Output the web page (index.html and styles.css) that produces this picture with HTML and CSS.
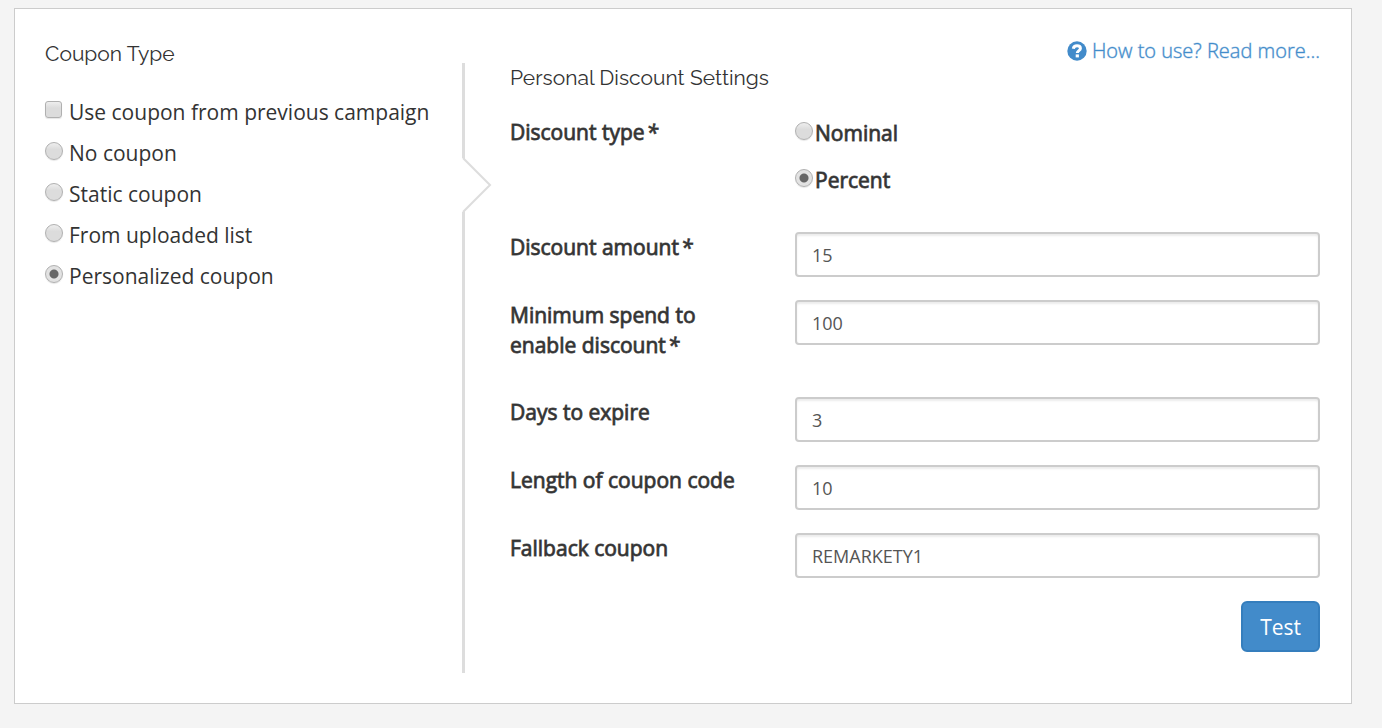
FILE: index.html
```html
<!DOCTYPE html>
<html lang="en">
<head>
    <meta charset="UTF-8">
    <meta name="viewport" content="width=device-width, initial-scale=1.0">
    <title>Coupon Settings</title>
    <link rel="stylesheet" href="styles.css">
</head>
<body>
    <form class="panel">
        <fieldset class="coupon-type">
            <legend class="section-title">Coupon Type</legend>
            <label class="option"><input type="checkbox" class="check" name="use_previous"> Use coupon from previous campaign</label>
            <label class="option"><input type="radio" class="radio" name="coupon_type" value="none"> No coupon</label>
            <label class="option"><input type="radio" class="radio" name="coupon_type" value="static"> Static coupon</label>
            <label class="option"><input type="radio" class="radio" name="coupon_type" value="list"> From uploaded list</label>
            <label class="option"><input type="radio" class="radio" name="coupon_type" value="personal" checked> Personalized coupon</label>
        </fieldset>

        <div class="main">
            <a class="help-link" href="#help">
                <svg class="help-icon" viewBox="0 0 20 20" aria-hidden="true">
                    <circle cx="10" cy="10" r="9.700" fill="currentColor"/>
                    <path d="M6.300 7.700C6.700 5.500 8.100 4.800 10 4.800c2 0 3.400 1 3.400 2.600 0 2.300-3.100 2.200-3.100 4.700" fill="none" stroke="#fff" stroke-width="3"/>
                    <rect x="8.700" y="13.400" width="3.200" height="3" fill="#fff"/>
                </svg>
                How to use? Read more...
            </a>

            <div class="settings">
                <!-- Arrow pointing from the selected type to its settings -->
                <svg class="arrow" viewBox="0 0 30 56" aria-hidden="true">
                    <path d="M0 1H1L29 28L1 55H0Z" fill="#fff"/>
                    <path d="M1 1L28 28L1 55" fill="none" stroke="#ddd" stroke-width="2"/>
                </svg>

                <h2 class="section-title">Personal Discount Settings</h2>

                <div class="row" role="radiogroup" aria-labelledby="discount-type">
                    <span class="field-label" id="discount-type">Discount type<em class="required">*</em></span>
                    <div class="choices">
                        <label class="choice"><input type="radio" class="radio" name="discount_type" value="nominal">Nominal</label>
                        <label class="choice"><input type="radio" class="radio" name="discount_type" value="percent" checked>Percent</label>
                    </div>
                </div>
                <div class="row">
                    <label class="field-label" for="amount">Discount amount<em class="required">*</em></label>
                    <input type="text" class="field" id="amount" value="15">
                </div>
                <div class="row row-tall">
                    <label class="field-label" for="min-spend">Minimum spend to enable discount<em class="required">*</em></label>
                    <input type="text" class="field" id="min-spend" value="100">
                </div>
                <div class="row">
                    <label class="field-label" for="expire">Days to expire</label>
                    <input type="text" class="field" id="expire" value="3">
                </div>
                <div class="row">
                    <label class="field-label" for="code-length">Length of coupon code</label>
                    <input type="text" class="field" id="code-length" value="10">
                </div>
                <div class="row">
                    <label class="field-label" for="fallback">Fallback coupon</label>
                    <input type="text" class="field" id="fallback" value="REMARKETY1">
                </div>
                <div class="actions">
                    <button type="button" class="btn">Test</button>
                </div>
            </div>
        </div>
    </form>
</body>
</html>
```
FILE: styles.css
```css
* {
    box-sizing: border-box;
}
body {
    margin: 0;
    padding: 8px 30px 24px 14px;
    background-color: #f4f4f4;
    color: #333;
    font-family: "Open Sans", sans-serif;
    font-size: 21px;
    line-height: 30px;
}
.panel {
    display: flex;
    padding: 30px 31px 30px 30px;
    background: #fff;
    border: 1px solid #ccc;
}
.section-title {
    margin: 0;
    padding: 0;
    font-family: Raleway, Lato, sans-serif;
    font-size: 21px;
    font-weight: 400;
}
.coupon-type {
    flex: 0 0 417px;
    margin: 0;
    padding: 0;
    border: 0;
}
.coupon-type .section-title {
    margin-bottom: 28px;
}
.option {
    display: flex;
    align-items: center;
    gap: 6px;
    margin-bottom: 11px;
}
.check,
.radio {
    appearance: none;
    flex: none;
    width: 18px;
    height: 18px;
    margin: 0 0 5px;
    border: 1px solid #b0b0b0;
    border-radius: 50%;
    background: linear-gradient(#eee, #dcdcdc 40%, #dcdcdc);
    box-shadow: 0 1px 1px rgba(0,0,0,0.1);
}
.check {
    width: 17px;
    height: 17px;
    margin-right: 1px;
    border-radius: 3px;
}
.radio:checked {
    background: radial-gradient(circle, #666 4px, #e2e2e2 5px);
}
.main {
    flex: 1;
    display: flex;
    flex-direction: column;
}
.help-link {
    display: flex;
    align-items: center;
    align-self: flex-end;
    gap: 5px;
    height: 24px;
    color: #428bca;
    font-size: 20px;
    font-weight: 300;
    text-decoration: none;
    -webkit-text-stroke: 1px rgba(66,139,202,0.4);
}
.help-icon {
    width: 20px;
    height: 20px;
}
.settings {
    position: relative;
    padding-left: 45px;
    padding-bottom: 21px;
    border-left: 3px solid #ddd;
}
.arrow {
    position: absolute;
    top: 94px;
    left: -3px;
    width: 30px;
    height: 56px;
}
.settings .section-title {
    margin-bottom: 24px;
}
.row {
    display: grid;
    grid-template-columns: 240px 1fr;
    column-gap: 45px;
    align-items: start;
    margin-bottom: 23px;
}
.row-tall {
    margin-bottom: 37px;
}
/* Regular width with a soft bold outline */
.field-label,
.choice {
    -webkit-text-stroke: 1px rgba(51,51,51,0.8);
}
.required {
    margin-left: 2px;
}
.choices {
    display: grid;
    gap: 17px;
    padding: 1px 0 14px;
}
.choice {
    display: flex;
    align-items: center;
    gap: 2px;
}
.field {
    width: 100%;
    height: 45px;
    padding: 0 15px;
    border: 2px solid #ccc;
    border-radius: 4px;
    background: #fff;
    box-shadow: inset 0 2px 2px rgba(0,0,0,0.08);
    color: #555;
    font-family: inherit;
    font-size: 18px;
}
.actions {
    display: flex;
    justify-content: flex-end;
}
.btn {
    height: 51px;
    padding: 0 17px;
    border: 2px solid #357ebd;
    border-radius: 6px;
    background: #428bca;
    color: #fff;
    font-family: inherit;
    font-size: 21px;
}
```
